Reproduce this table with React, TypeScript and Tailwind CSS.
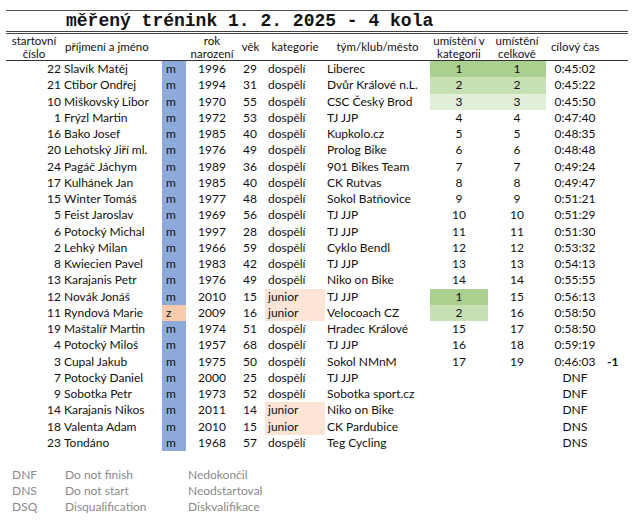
import React from "react";

type Row = {
  num: number;
  name: string;
  sex: "m" | "z";
  year: number;
  age: number;
  cat: "dospělí" | "junior";
  team: string;
  posCat?: number;
  posAll?: number;
  time: string;
  note?: string;
};

const rows: Row[] = [
  { num: 22, name: "Slavík Matěj", sex: "m", year: 1996, age: 29, cat: "dospělí", team: "Liberec", posCat: 1, posAll: 1, time: "0:45:02" },
  { num: 21, name: "Ctibor Ondřej", sex: "m", year: 1994, age: 31, cat: "dospělí", team: "Dvůr Králové n.L.", posCat: 2, posAll: 2, time: "0:45:22" },
  { num: 10, name: "Miškovský Libor", sex: "m", year: 1970, age: 55, cat: "dospělí", team: "CSC Český Brod", posCat: 3, posAll: 3, time: "0:45:50" },
  { num: 1, name: "Frýzl Martin", sex: "m", year: 1972, age: 53, cat: "dospělí", team: "TJ JJP", posCat: 4, posAll: 4, time: "0:47:40" },
  { num: 16, name: "Bako Josef", sex: "m", year: 1985, age: 40, cat: "dospělí", team: "Kupkolo.cz", posCat: 5, posAll: 5, time: "0:48:35" },
  { num: 20, name: "Lehotský Jiří ml.", sex: "m", year: 1976, age: 49, cat: "dospělí", team: "Prolog Bike", posCat: 6, posAll: 6, time: "0:48:48" },
  { num: 24, name: "Pagáč Jáchym", sex: "m", year: 1989, age: 36, cat: "dospělí", team: "901 Bikes Team", posCat: 7, posAll: 7, time: "0:49:24" },
  { num: 17, name: "Kulhánek Jan", sex: "m", year: 1985, age: 40, cat: "dospělí", team: "CK Rutvas", posCat: 8, posAll: 8, time: "0:49:47" },
  { num: 15, name: "Winter Tomáš", sex: "m", year: 1977, age: 48, cat: "dospělí", team: "Sokol Batňovice", posCat: 9, posAll: 9, time: "0:51:21" },
  { num: 5, name: "Feist Jaroslav", sex: "m", year: 1969, age: 56, cat: "dospělí", team: "TJ JJP", posCat: 10, posAll: 10, time: "0:51:29" },
  { num: 6, name: "Potocký Michal", sex: "m", year: 1997, age: 28, cat: "dospělí", team: "TJ JJP", posCat: 11, posAll: 11, time: "0:51:30" },
  { num: 2, name: "Lehký Milan", sex: "m", year: 1966, age: 59, cat: "dospělí", team: "Cyklo Bendl", posCat: 12, posAll: 12, time: "0:53:32" },
  { num: 8, name: "Kwiecien Pavel", sex: "m", year: 1983, age: 42, cat: "dospělí", team: "TJ JJP", posCat: 13, posAll: 13, time: "0:54:13" },
  { num: 13, name: "Karajanis Petr", sex: "m", year: 1976, age: 49, cat: "dospělí", team: "Niko on Bike", posCat: 14, posAll: 14, time: "0:55:55" },
  { num: 12, name: "Novák Jonáš", sex: "m", year: 2010, age: 15, cat: "junior", team: "TJ JJP", posCat: 1, posAll: 15, time: "0:56:13" },
  { num: 11, name: "Ryndová Marie", sex: "z", year: 2009, age: 16, cat: "junior", team: "Velocoach CZ", posCat: 2, posAll: 16, time: "0:58:50" },
  { num: 19, name: "Maštalíř Martin", sex: "m", year: 1974, age: 51, cat: "dospělí", team: "Hradec Králové", posCat: 15, posAll: 17, time: "0:58:50" },
  { num: 4, name: "Potocký Miloš", sex: "m", year: 1957, age: 68, cat: "dospělí", team: "TJ JJP", posCat: 16, posAll: 18, time: "0:59:19" },
  { num: 3, name: "Cupal Jakub", sex: "m", year: 1975, age: 50, cat: "dospělí", team: "Sokol NMnM", posCat: 17, posAll: 19, time: "0:46:03", note: "-1" },
  { num: 7, name: "Potocký Daniel", sex: "m", year: 2000, age: 25, cat: "dospělí", team: "TJ JJP", time: "DNF" },
  { num: 9, name: "Sobotka Petr", sex: "m", year: 1973, age: 52, cat: "dospělí", team: "Sobotka sport.cz", time: "DNF" },
  { num: 14, name: "Karajanis Nikos", sex: "m", year: 2011, age: 14, cat: "junior", team: "Niko on Bike", time: "DNF" },
  { num: 18, name: "Valenta Adam", sex: "m", year: 2010, age: 15, cat: "junior", team: "CK Pardubice", time: "DNS" },
  { num: 23, name: "Tondáno", sex: "m", year: 1968, age: 57, cat: "dospělí", team: "Teg Cycling", time: "DNS" },
];

const legend = [
  ["DNF", "Do not finish", "Nedokončil"],
  ["DNS", "Do not start", "Neodstartoval"],
  ["DSQ", "Disqualification", "Diskvalifikace"],
];

const cols =
  "grid grid-cols-[56px_100px_24px_52px_27px_60px_105px_58px_58px_58px_28px]";

// excel-like colour scale for the top places
function placeBg(row: Row, kind: "cat" | "all") {
  if (row.cat === "junior") {
    if (kind === "all") return "";
    if (row.posCat === 1) return "bg-[#a9d08e]";
    if (row.posCat === 2) return "bg-[#c6e0b4]";
    return "";
  }
  if (row.posAll === 1) return "bg-[#a9d08e]";
  if (row.posAll === 2) return "bg-[#c6e0b4]";
  if (row.posAll === 3) return "bg-[#e2efda]";
  return "";
}

function TwoLine({ a, b }: { a: string; b: string }) {
  return (
    <div className="flex flex-col items-center text-[11.5px]">
      <div className="h-[13px] flex items-center">{a}</div>
      <div className="h-[13px] flex items-center">{b}</div>
    </div>
  );
}

export default function App() {
  return (
    <div className="w-[640px] h-[524px] bg-white text-[#111] font-['Lato',sans-serif] text-[12px] leading-none overflow-hidden">
      <div className="pt-[10px] px-[6px] w-[634px]">
        {/* Title */}
        <div className="border-t border-[#555] h-[21px] flex items-center pl-[60px]">
          <span className="font-['Liberation_Mono',monospace] font-bold text-[18px]">
            měřený trénink 1. 2. 2025 - 4 kola
          </span>
        </div>
        <div className="border-t border-b border-[#444] h-[3px]" />

        {/* Header */}
        <div className={cols + " h-[27px] border-b border-[#333] items-center"}>
          <TwoLine a="startovní" b="číslo" />
          <div className="pl-[3px] text-[11.5px]">příjmení a jméno</div>
          <div />
          <TwoLine a="rok" b="narození" />
          <div className="text-center pr-[2px] text-[11.5px]">věk</div>
          <div className="text-center text-[11.5px]">kategorie</div>
          <div className="text-center text-[11.5px]">tým/klub/město</div>
          <TwoLine a="umístění v" b="kategorii" />
          <TwoLine a="umístění" b="celkově" />
          <div className="text-center text-[11.5px]">cílový čas</div>
          <div />
        </div>

        {/* Rows */}
        <div>
          {rows.map((r) => (
            <div key={r.num} className={cols + " h-[16.25px]"}>
              <div className="pr-[1px] flex items-center justify-end">{r.num}</div>
              <div className="pl-[2px] flex items-center whitespace-nowrap">{r.name}</div>
              <div
                className={
                  "pl-[4px] flex items-center " +
                  (r.sex === "z" ? "bg-[#f8cbad]" : "bg-[#8eaadb]")
                }
              >
                {r.sex}
              </div>
              <div className="flex items-center justify-center">{r.year}</div>
              <div className="flex items-center justify-end pr-[8px]">{r.age}</div>
              <div
                className={
                  "pl-[3px] flex items-center " +
                  (r.cat === "junior" ? "bg-[#fce4d6]" : "")
                }
              >
                {r.cat}
              </div>
              <div className="pl-[2px] flex items-center whitespace-nowrap">{r.team}</div>
              <div className={"flex items-center justify-center " + placeBg(r, "cat")}>
                {r.posCat}
              </div>
              <div className={"flex items-center justify-center " + placeBg(r, "all")}>
                {r.posAll}
              </div>
              <div className="flex items-center justify-center">{r.time}</div>
              <div className="flex items-center pl-[3px] font-bold">{r.note}</div>
            </div>
          ))}
        </div>

        {/* Legend */}
        <div className="mt-[16px] text-[#8a8a8a]">
          {legend.map(([code, en, cz]) => (
            <div key={code} className="grid grid-cols-[53px_123px_1fr] h-[16px] items-center pl-[6px]">
              <div>{code}</div>
              <div>{en}</div>
              <div>{cz}</div>
            </div>
          ))}
        </div>
      </div>
    </div>
  );
}
